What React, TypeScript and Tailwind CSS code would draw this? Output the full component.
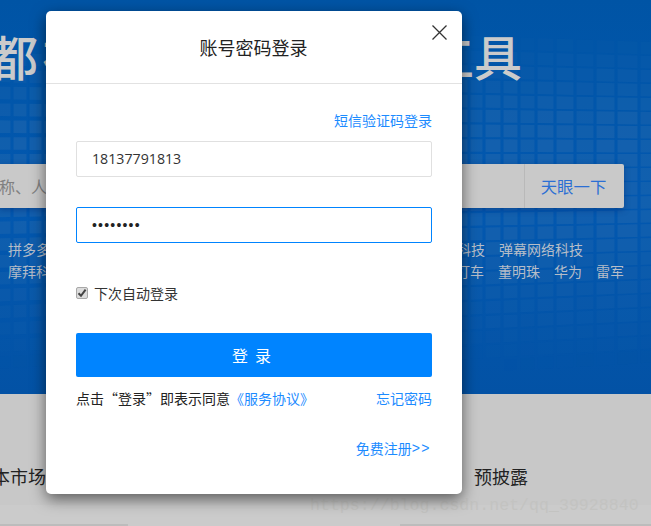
import React from "react";

const cjk = { fontFamily: '"Noto Sans CJK SC", "Liberation Sans", sans-serif' };

const COLS = [-5, 12, 28, 43, 60, 78, 96, 114, 132, 150, 168, 186, 204, 222, 240, 258, 276, 294, 312, 330, 348, 366, 384, 402, 420, 438, 454, 469, 484, 502, 519, 536, 555, 575, 595, 616, 639, 665];

function HeroGrid() {
  const cells: React.ReactNode[] = [];
  for (let c = 0; c < COLS.length - 1; c++) {
    const x0 = COLS[c] + 1.5;
    const x1 = COLS[c + 1] - 1.5;
    for (let r = 0; r < 24; r++) {
      const yAt = (x: number) => 42 + r * 14 + (651 - x) * 0.035 * ((r - 8) / 8);
      const y0a = yAt(x0);
      const y0b = yAt(x1);
      const mid = (y0a + y0b) / 2;
      let o = 0.55;
      if (mid < 120) o = Math.max(0, ((mid - 25) / 95) * 0.55);
      if (mid > 210) o = Math.max(0, 0.55 * (1 - (mid - 210) / 150));
      const h = 12.6;
      cells.push(
        <path
          key={`${c}-${r}`}
          d={`M${x0} ${y0a}L${x1} ${y0b}L${x1} ${y0b + h}L${x0} ${y0a + h}Z`}
          fill="#2268ae"
          opacity={o * (c % 3 === 0 ? 0.85 : 1)}
        />
      );
    }
  }
  return (
    <svg className="absolute inset-0" width="651" height="394" viewBox="0 0 651 394">
      {cells}
    </svg>
  );
}

export default function App() {
  return (
    <div className="relative w-[651px] h-[526px] overflow-hidden bg-[#c9c9c9]" style={cjk}>
      <div className="relative h-[394px] overflow-hidden bg-gradient-to-b from-[#0054a5] via-[#0258b0] to-[#0352a5]">
        <HeroGrid />
        <div className="relative">
          <div className="pt-[27px] ml-[-10px] text-[48px] leading-[56px] font-medium text-[#cbcbcb] whitespace-nowrap">
            <span className="mr-[4px]">都</span>在使用的商业安全工具
          </div>
          <div className="mt-[81px] ml-[-1px] w-[625px] h-[44px] flex rounded-r-[2px] bg-[#c9c9c9] shadow-[0_2px_6px_rgba(0,40,110,0.45)]">
            <div className="flex-1 flex items-center text-[16px] text-[#808080] whitespace-nowrap overflow-hidden">
              称、人名、品牌
            </div>
            <div className="w-[100px] border-l border-[#b9b9b9] flex items-center justify-center text-[16.4px] text-[#2b6fd4] pr-[2px]">
              天眼一下
            </div>
          </div>
          <div className="mt-[31px] flex justify-between pl-[8px] pr-[68px] text-[14px] leading-[20px] text-[#b6bdc8]">
            <span>拼多多</span>
            <div className="flex gap-[14px]">
              <span>人工智能科技</span>
              <span>弹幕网络科技</span>
            </div>
          </div>
          <div className="mt-[2px] flex justify-between pl-[8px] pr-[27px] text-[14px] leading-[20px] text-[#b6bdc8]">
            <span>摩拜科技</span>
            <div className="flex gap-[14px]">
              <span>滴滴打车</span>
              <span>董明珠</span>
              <span>华为</span>
              <span>雷军</span>
            </div>
          </div>
        </div>
      </div>

      <div className="h-[111px] bg-[#c8c8c8] flex justify-between items-start pt-[72px] text-[18px] leading-[20px] text-[#222]">
        <span className="ml-[-8px]">本市场</span>
        <span className="mr-[123px]">预披露</span>
      </div>
      <div className="h-[19px] bg-[#cbcbcb]" />
      <div className="h-[2px] flex">
        <div className="w-[128px] bg-[#bcbcbc]" />
        <div className="w-[272px] bg-[#cbcbcb]" />
        <div className="flex-1 bg-[#bcbcbc]" />
      </div>

      <div
        className="absolute left-[310px] top-[496px] text-[16.6px] leading-[20px] text-[#c3c3c1] whitespace-nowrap"
        style={{ fontFamily: '"Liberation Mono", monospace' }}
      >
        https://blog.csdn.net/qq_39928840
      </div>

      <div className="absolute left-[46px] top-[11px] w-[416px] h-[483px] bg-white rounded-[5px] shadow-[0_5px_15px_rgba(0,0,0,0.55)]">
        <div className="relative h-[73px] border-b border-[#e2e2e2] flex items-center justify-center pr-[1px] text-[18px] text-[#222]">
          账号密码登录
          <svg className="absolute left-[386px] top-[14px]" width="15" height="15" viewBox="0 0 15 15" fill="none">
            <path d="M0.5 0.5L14.5 14.5M14.5 0.5L0.5 14.5" stroke="#333" strokeWidth="1.3" />
          </svg>
        </div>
        <div className="px-[30px]">
          <div className="mt-[26px] h-[20px] flex justify-end text-[14px] leading-[20px] text-[#1c8bff]">
            短信验证码登录
          </div>
          <div
            className="mt-[11px] h-[36px] border border-[#e0e0e0] rounded-[2px] pl-[15px] flex items-center text-[14.2px] text-[#333]"
            style={{ fontFamily: '"Open Sans", sans-serif' }}
          >
            18137791813
          </div>
          <div
            className="mt-[30px] h-[36px] border border-[#0084ff] rounded-[2px] pl-[15px] flex items-center text-[14px] tracking-[1.2px] text-[#222]"
            style={{ fontFamily: '"Liberation Sans", sans-serif' }}
          >
            ••••••••
          </div>
          <div className="mt-[40px] h-[20px] flex items-center text-[14px] text-[#333]">
            <span className="w-[12px] h-[12px] rounded-[2px] border border-[#a8a8a8] bg-[#dcdcdc] flex items-center justify-center mr-[6px]">
              <svg width="10" height="10" viewBox="0 0 10 10" fill="none">
                <path d="M1.5 5.2L4 7.8L8.6 1.6" stroke="#444" strokeWidth="2" />
              </svg>
            </span>
            下次自动登录
          </div>
          <button className="mt-[30px] w-full h-[44px] rounded-[2px] bg-[#0084ff] text-white text-[16px] whitespace-pre pr-[5px]">
            登  录
          </button>
          <div className="mt-[11px] h-[20px] flex justify-between text-[14px] leading-[20px] text-[#222]">
            <span>
              点击“登录”即表示同意<span className="text-[#1c8bff]">《服务协议》</span>
            </span>
            <span className="text-[#1c8bff]">忘记密码</span>
          </div>
          <div className="mt-[30px] h-[20px] flex justify-end items-center text-[14px] leading-[20px] text-[#1c8bff] pr-[1px]">
            免费注册
            <span className="tracking-[1.5px]" style={{ fontFamily: '"Liberation Sans", sans-serif' }}>
              &gt;&gt;
            </span>
          </div>
        </div>
      </div>
    </div>
  );
}
